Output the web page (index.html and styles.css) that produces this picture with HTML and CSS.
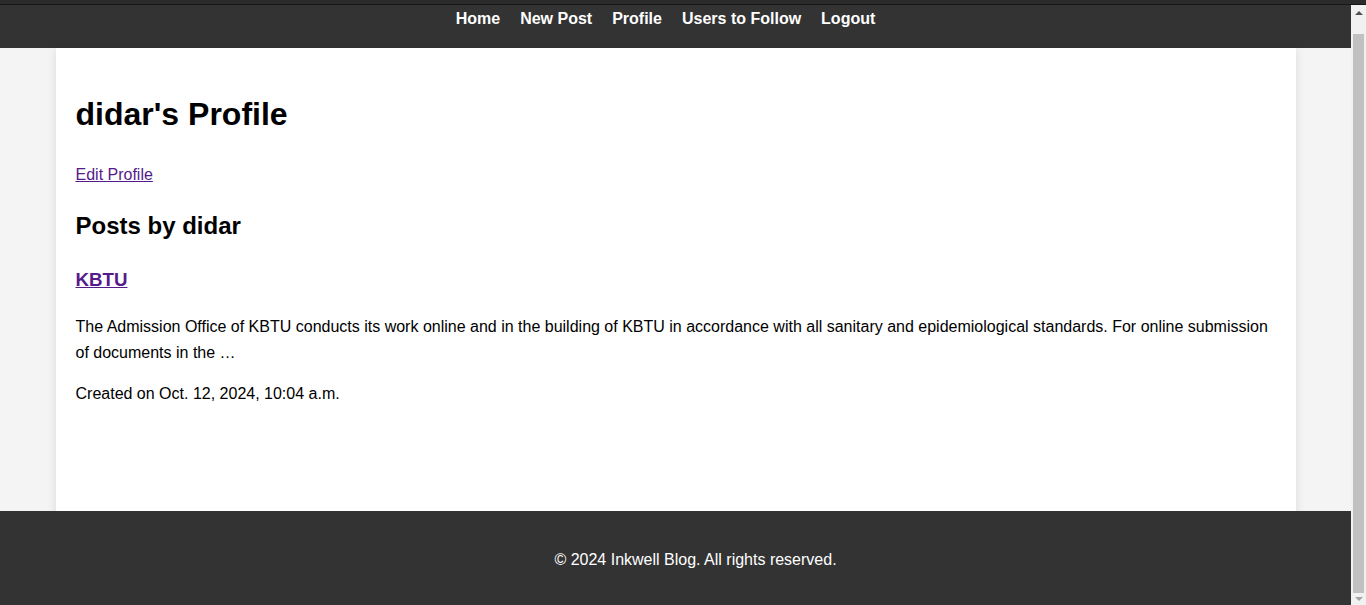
FILE: index.html
```html
<!DOCTYPE html>
<html lang="en">
<head>
<meta charset="utf-8">
<title>didar's Profile</title>
<link rel="stylesheet" href="styles.css">
</head>
<body>
<div class="window-edge"></div>
<div class="scrollbar" aria-hidden="true">
  <span class="sb-button"><span class="sb-arrow-up"></span></span>
  <span class="sb-thumb"></span>
  <span class="sb-button sb-button-down"><span class="sb-arrow-down"></span></span>
</div>
<header class="site-header">
  <nav class="nav"><a class="nav-link" href="#">Home</a><a class="nav-link" href="#">New Post</a><a class="nav-link" href="#">Profile</a><a class="nav-link" href="#">Users to Follow</a><a class="nav-link" href="#">Logout</a></nav>
</header>
<main class="container">
  <h1 class="page-title">didar's Profile</h1>
  <p class="text"><a class="link" href="#">Edit Profile</a></p>
  <h2 class="section-title">Posts by didar</h2>
  <div class="post">
    <h3 class="post-title"><a class="link" href="#">KBTU</a></h3>
    <p class="text">The Admission Office of KBTU conducts its work online and in the building of KBTU in accordance with all sanitary and epidemiological standards. For online submission of documents in the …</p>
    <p class="text">Created on Oct. 12, 2024, 10:04 a.m.</p>
  </div>
</main>
<footer class="site-footer">
  <p class="footer-text">© 2024 Inkwell Blog. All rights reserved.</p>
</footer>
<script src="script.js"></script>
</body>
</html>
```

FILE: styles.css
```css
html {
  background: #f4f4f4;
}

body {
  margin: 0 15px 0 0;
  font-family: "Liberation Sans", Arial, sans-serif;
  line-height: 1.6;
  color: #000;
  background: #f4f4f4;
}

.window-edge {
  position: fixed;
  top: 0;
  left: 0;
  right: 0;
  height: 4px;
  background: #2b2b2b;
  border-bottom: 1px solid #161616;
  z-index: 20;
}

.scrollbar {
  position: fixed;
  top: 5px;
  right: 0;
  bottom: 0;
  width: 15px;
  background: #f1f1f1;
  display: flex;
  flex-direction: column;
  align-items: center;
  z-index: 10;
}

.sb-button {
  height: 15px;
  width: 15px;
  display: flex;
  align-items: center;
  justify-content: center;
}

.sb-button-down {
  height: 12px;
}

.sb-arrow-up {
  width: 0;
  height: 0;
  border-left: 4px solid transparent;
  border-right: 4px solid transparent;
  border-bottom: 4px solid #505050;
}

.sb-arrow-down {
  width: 0;
  height: 0;
  border-left: 4px solid transparent;
  border-right: 4px solid transparent;
  border-top: 4px solid #a3a3a3;
}

.sb-thumb {
  width: 11px;
  height: 559px;
  margin-top: auto;
  background: #c1c1c1;
}

.site-header {
  background: #333;
  padding: 16px 0;
}

.nav {
  display: flex;
  justify-content: center;
}

.nav-link {
  color: #fff;
  font-weight: bold;
  text-decoration: none;
  margin-right: 20px;
}

.container {
  width: 1200px;
  min-height: 517px;
  margin: 0 auto;
  padding: 20px;
  background: #fff;
  box-shadow: 0 0 10px rgba(0, 0, 0, 0.1);
}

.page-title {
  font-size: 32px;
  margin: 21.44px 0;
}

.section-title {
  font-size: 24px;
  margin: 19.92px 0;
}

.post-title {
  font-size: 18.72px;
  margin: 18.72px 0;
}

.text {
  margin: 16px 0;
}

.link {
  color: #551a8b;
}

.site-footer {
  position: fixed;
  left: 0;
  bottom: 0;
  width: calc(100% - 15px);
  padding: 20px 20px 16px;
  background: #333;
  color: #fff;
  text-align: center;
}

.footer-text {
  margin: 16px 0;
}
```

FILE: script.js
```js
function toBottom() {
  window.scrollTo(0, document.documentElement.scrollHeight);
}
toBottom();
window.addEventListener('load', toBottom);
```
